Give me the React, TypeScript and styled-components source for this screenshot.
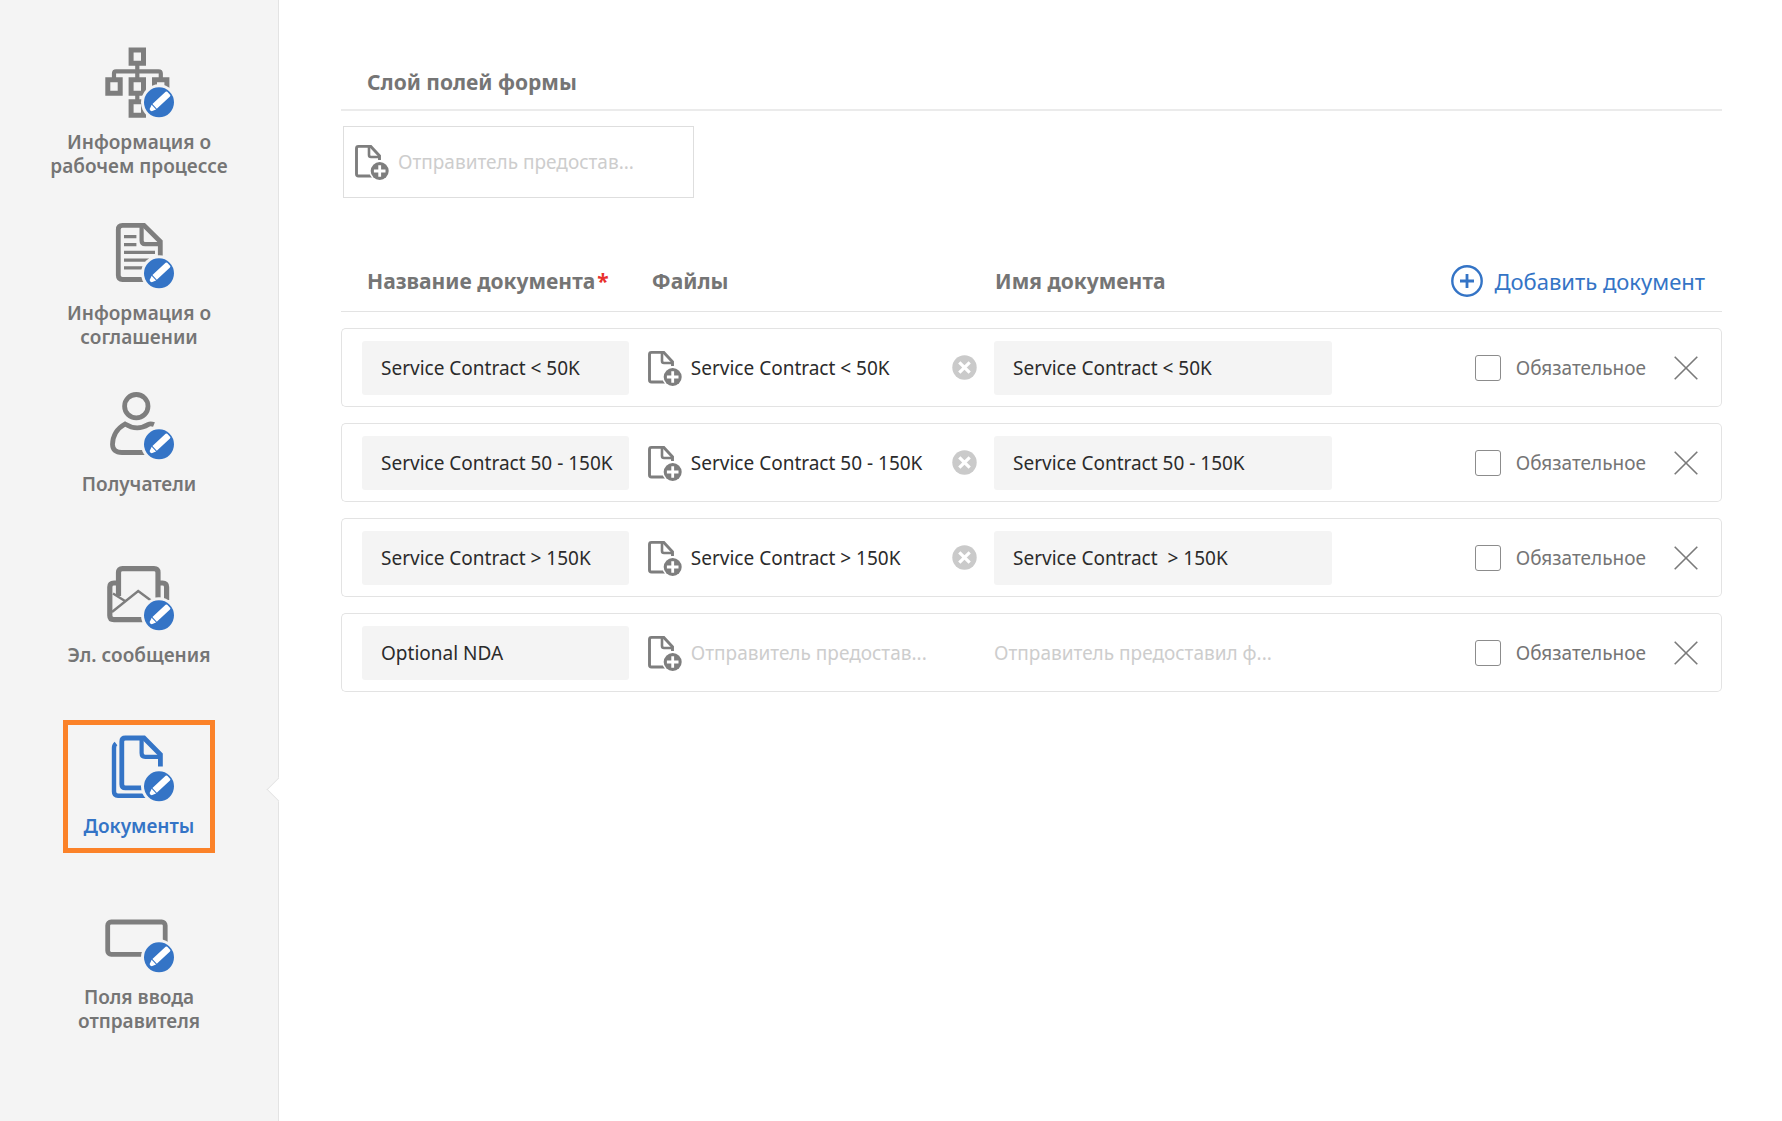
import React from "react";
import styled, { createGlobalStyle, css } from "styled-components";

const color = {
  blue: "#3474c6",
  gray: "#7e7e7e",
  text: "#757575",
  ink: "#2b2b2b",
  faint: "#cdcdcd",
  line: "#e3e3e3",
  panel: "#f4f4f4",
  accent: "#fb8229",
};

const GlobalStyle = createGlobalStyle`
  *, *::before, *::after { box-sizing: border-box; }
  body {
    margin: 0;
    background: #fff;
    color: ${color.text};
    font-family: "Noto Sans", "Open Sans", sans-serif;
    font-size: 19px;
    line-height: 24px;
  }
  button, input { font: inherit; color: inherit; }
  button { border: 0; padding: 0; background: none; cursor: pointer; }
`;

const Page = styled.div`
  display: flex;
  min-height: 100vh;
`;

const Sidebar = styled.nav`
  flex: 0 0 279px;
  padding-top: 36px;
  background: ${color.panel};
  border-right: 1px solid ${color.line};
`;

const StepList = styled.ul`
  display: grid;
  grid-auto-rows: 171px;
  margin: 0;
  padding: 0;
  list-style: none;
`;

const Step = styled.li<{ $active?: boolean }>`
  position: relative;
  display: flex;
  justify-content: center;
  align-items: flex-start;

  ${(p) =>
    p.$active &&
    css`
      &::after {
        content: "";
        position: absolute;
        top: 61px;
        right: -9px;
        width: 17px;
        height: 17px;
        background: #fff;
        border: solid ${color.line};
        border-width: 0 0 1px 1px;
        transform: rotate(45deg);
      }
    `}
`;

const StepLink = styled.a<{ $active?: boolean }>`
  display: flex;
  flex-direction: column;
  align-items: center;
  gap: 9px;
  width: ${(p) => (p.$active ? "152px" : "220px")};
  min-height: 133px;
  padding-top: 4px;
  border: 5px solid ${(p) => (p.$active ? color.accent : "transparent")};
  color: ${(p) => (p.$active ? color.blue : color.text)};
  font-weight: 600;
  text-align: center;
  text-decoration: none;
`;

const StepLabel = styled.span`
  white-space: pre-line;
`;

const Main = styled.main`
  flex: 1;
  min-width: 0;
  padding: 64px 60px 64px 62px;
`;

const SectionTitle = styled.h2`
  margin: 0;
  padding: 2px 26px 11px;
  border-bottom: 2px solid #ebebeb;
  font-size: 21px;
  line-height: 32px;
  font-weight: 700;
`;

const FieldLayer = styled.button`
  display: flex;
  align-items: center;
  gap: 8px;
  width: 351px;
  height: 72px;
  margin: 15px 0 0 2px;
  padding: 0 10px;
  border: 1px solid #dedede;
`;

const Faint = styled.span`
  color: ${color.faint};
`;

const Documents = styled.table`
  width: 100%;
  margin-top: 49px;
  border-collapse: separate;
  border-spacing: 0 16px;
  table-layout: fixed;
`;

const HeadCell = styled.th<{ $width: string; $indent: number }>`
  width: ${(p) => p.$width};
  height: 49px;
  padding: 0 0 12px ${(p) => p.$indent}px;
  border-bottom: 1px solid ${color.line};
  font-size: 21px;
  line-height: 32px;
  font-weight: 700;
  text-align: left;
  white-space: nowrap;
`;

const Required = styled.span`
  margin-left: 2px;
  color: #e8302c;
`;

const AddButton = styled.button`
  display: flex;
  align-items: center;
  gap: 11px;
  margin: 0 17px 0 auto;
  color: ${color.blue};
  font-size: 22px;
  font-weight: 400;
`;

const Cell = styled.td<{ $left: number; $right: number }>`
  height: 79px;
  padding: 0 ${(p) => p.$right}px 0 ${(p) => p.$left}px;
  border: solid ${color.line};
  border-width: 1px 0;

  &:first-child {
    border-left-width: 1px;
    border-radius: 5px 0 0 5px;
  }
  &:last-child {
    border-right-width: 1px;
    border-radius: 0 5px 5px 0;
  }
`;

const TextField = styled.input`
  display: block;
  width: 100%;
  height: 54px;
  padding: 0 0 0 19px;
  border: 0;
  border-radius: 3px;
  background: ${color.panel};
  color: ${color.ink};
`;

const FileCell = styled.div`
  display: flex;
  align-items: center;
  justify-content: space-between;
`;

const FileButton = styled.button`
  display: flex;
  align-items: center;
  gap: 8px;
  color: ${color.ink};
  white-space: nowrap;
`;

const IconButton = styled.button`
  display: flex;
`;

const RowActions = styled.div`
  display: flex;
  align-items: center;
  justify-content: flex-end;
  gap: 28px;
`;

const RequiredOption = styled.label`
  display: flex;
  align-items: center;
  gap: 15px;
`;

const Checkbox = styled.input`
  appearance: none;
  width: 26px;
  height: 26px;
  margin: 0;
  border: 1px solid #8c8c8c;
  border-radius: 3px;
  background: #fff;

  &:checked {
    background: ${color.blue};
  }
`;

function StepIcon({ children, active }: { children: React.ReactNode; active?: boolean }) {
  return (
    <svg width="72" height="76" viewBox="0 0 72 76" fill="none" aria-hidden="true">
      <g stroke={active ? color.blue : color.gray} strokeWidth="4.8">
        {children}
      </g>
      <circle cx="56" cy="57.3" r="18" fill={color.panel} />
      <circle cx="56" cy="57.3" r="15" fill={color.blue} />
      <g transform="translate(56 57.3) rotate(-43)" fill="#fff">
        <path d="M-6 -3.2H12a1.2 1.2 0 0 1 1.2 1.2V2a1.2 1.2 0 0 1 -1.2 1.2H-6z" />
        <path d="M-7 -3.2V3.2L-11.5 1.6Q-12.6 0 -11.5 -1.4z" />
      </g>
    </svg>
  );
}

const WorkflowArt = () => (
  <>
    <path d="M34.3 19V35M11 35V28.5Q11 26.3 13 26.3H55.5Q57.8 26.3 57.8 28.5V35M34.3 49V57" strokeWidth="4.2" />
    <path
      d="M28.1 5.1h12.4v13.2h-12.4zM4.8 34.8h12.4v13.4H4.8zM28.1 34.8h12.4v13.4H28.1zM51.5 34.8h12.4v13.4H51.5zM28.1 56.8h12.4v13.4H28.1z"
      strokeWidth="5"
    />
  </>
);

const AgreementArt = () => (
  <>
    <path d="M57.3 46V25.5L41 9.3H19.5Q15.3 9.3 15.3 13.5V59.3Q15.3 63.5 19.5 63.5H45" />
    <path d="M38.6 9V24.5Q38.6 28.2 42.2 28.2H57" strokeWidth="4.2" />
    <path d="M21 20.7H33.4M21 28.6H33.4M21 36.4H52M21 44.1H46M21 51.8H40" strokeWidth="3.2" />
  </>
);

const RecipientArt = () => (
  <>
    <circle cx="33.3" cy="19.2" r="11.7" />
    <path d="M51 37.6Q47.5 36.2 45.5 37.4Q34 44.5 22 37Q9.8 44 9.5 57.5Q9.8 65.5 19 65.5H42" />
  </>
);

const EmailArt = () => (
  <>
    <path d="M15.5 38V14.5Q15.5 10.6 19.5 10.6H51Q55 10.6 55 14.5V40" strokeWidth="5.2" />
    <path
      d="M15 25H11Q6.8 25 6.8 29V57.5Q6.8 61.7 11 61.7H42M55 25H59.5Q63.6 25 63.6 29V42"
      strokeWidth="5.2"
    />
    <path d="M10 35.5L22 43M9 54L35.2 33L50 44" strokeWidth="2.4" />
  </>
);

const DocumentsArt = () => (
  <>
    <path d="M13 14.5Q11 16 11 19V62.5Q11 66.8 15 66.8H44" strokeWidth="4.4" />
    <path d="M57.4 37.5V25.5L41 9H22.5Q18.8 9 18.8 12.500V55.2Q18.8 58.8 22.5 58.8H44" />
    <path d="M38.6 9V24Q38.6 27.8 42.2 27.8H57" strokeWidth="4.2" />
  </>
);

const InputFieldsArt = () => <rect x="4.7" y="22" width="57.5" height="32.3" rx="3.5" />;

function FileAddIcon() {
  return (
    <svg width="36" height="36" viewBox="0 0 36 36" fill="none" aria-hidden="true">
      <path
        d="M25.5 16V11.8L16.8 2.4H4.5Q2.5 2.4 2.5 4.4V30Q2.5 32 4.5 32H20"
        stroke={color.gray}
        strokeWidth="2.9"
      />
      <path d="M15 2.4V11Q15 13 17 13H25.5" stroke={color.gray} strokeWidth="2.6" />
      <circle cx="25.7" cy="27" r="10.4" fill="#fff" />
      <circle cx="25.7" cy="27" r="9" fill={color.gray} />
      <path d="M25.7 21.2V32.8M19.9 27H31.5" stroke="#fff" strokeWidth="2.8" />
    </svg>
  );
}

function AddIcon() {
  return (
    <svg width="32" height="32" viewBox="0 0 32 32" fill="none" stroke={color.blue} aria-hidden="true">
      <circle cx="16" cy="16" r="14.7" strokeWidth="2.4" />
      <path d="M16 9V23M9 16H23" strokeWidth="2.8" />
    </svg>
  );
}

function ClearIcon() {
  return (
    <svg width="25" height="25" viewBox="0 0 25 25" aria-hidden="true">
      <circle cx="12.5" cy="12.5" r="12.2" fill="#cacaca" />
      <path d="M7.3 7.3L17.7 17.7M17.7 7.3L7.3 17.7" stroke="#fff" strokeWidth="3.2" />
    </svg>
  );
}

function RemoveIcon() {
  return (
    <svg width="24" height="24" viewBox="0 0 24 24" stroke="#7a7a7a" strokeWidth="1.6" aria-hidden="true">
      <path d="M0.7 0.7L23.3 23.3M23.3 0.7L0.7 23.3" />
    </svg>
  );
}

const steps = [
  { id: "workflow", label: "Информация о\nрабочем процессе", Art: WorkflowArt },
  { id: "agreement", label: "Информация о\nсоглашении", Art: AgreementArt },
  { id: "recipients", label: "Получатели", Art: RecipientArt },
  { id: "emails", label: "Эл. сообщения", Art: EmailArt },
  { id: "documents", label: "Документы", Art: DocumentsArt, active: true },
  { id: "fields", label: "Поля ввода\nотправителя", Art: InputFieldsArt },
];

const documents = [
  { title: "Service Contract < 50K", file: "Service Contract < 50K", name: "Service Contract < 50K" },
  { title: "Service Contract 50 - 150K", file: "Service Contract 50 - 150K", name: "Service Contract 50 - 150K" },
  { title: "Service Contract > 150K", file: "Service Contract > 150K", name: "Service Contract  > 150K" },
  { title: "Optional NDA" },
];

export default function App() {
  return (
    <Page>
      <GlobalStyle />
      <Sidebar>
        <StepList>
          {steps.map(({ id, label, Art, active }) => (
            <Step key={id} $active={active}>
              <StepLink href={`#${id}`} $active={active} aria-current={active ? "step" : undefined}>
                <StepIcon active={active}>
                  <Art />
                </StepIcon>
                <StepLabel>{label}</StepLabel>
              </StepLink>
            </Step>
          ))}
        </StepList>
      </Sidebar>
      <Main>
        <SectionTitle>Слой полей формы</SectionTitle>
        <FieldLayer type="button">
          <FileAddIcon />
          <Faint>Отправитель предостав...</Faint>
        </FieldLayer>

        <Documents>
          <thead>
            <tr>
              <HeadCell $width="22%" $indent={26}>
                Название документа<Required>*</Required>
              </HeadCell>
              <HeadCell $width="25%" $indent={7}>Файлы</HeadCell>
              <HeadCell $width="25%" $indent={5}>Имя документа</HeadCell>
              <HeadCell $width="28%" $indent={0}>
                <AddButton type="button">
                  <AddIcon />
                  Добавить документ
                </AddButton>
              </HeadCell>
            </tr>
          </thead>
          <tbody>
            {documents.map((doc) => (
              <tr key={doc.title}>
                <Cell $left={20} $right={16}>
                  <TextField aria-label="Название документа" defaultValue={doc.title} />
                </Cell>
                <Cell $left={2} $right={13}>
                  <FileCell>
                    <FileButton type="button">
                      <FileAddIcon />
                      {doc.file ?? <Faint>Отправитель предостав...</Faint>}
                    </FileButton>
                    {doc.file && (
                      <IconButton type="button" aria-label="Удалить файл">
                        <ClearIcon />
                      </IconButton>
                    )}
                  </FileCell>
                </Cell>
                <Cell $left={4} $right={3}>
                  {doc.name ? (
                    <TextField aria-label="Имя документа" defaultValue={doc.name} />
                  ) : (
                    <Faint>Отправитель предоставил ф...</Faint>
                  )}
                </Cell>
                <Cell $left={0} $right={23}>
                  <RowActions>
                    <RequiredOption>
                      <Checkbox type="checkbox" />
                      Обязательное
                    </RequiredOption>
                    <IconButton type="button" aria-label="Удалить документ">
                      <RemoveIcon />
                    </IconButton>
                  </RowActions>
                </Cell>
              </tr>
            ))}
          </tbody>
        </Documents>
      </Main>
    </Page>
  );
}
